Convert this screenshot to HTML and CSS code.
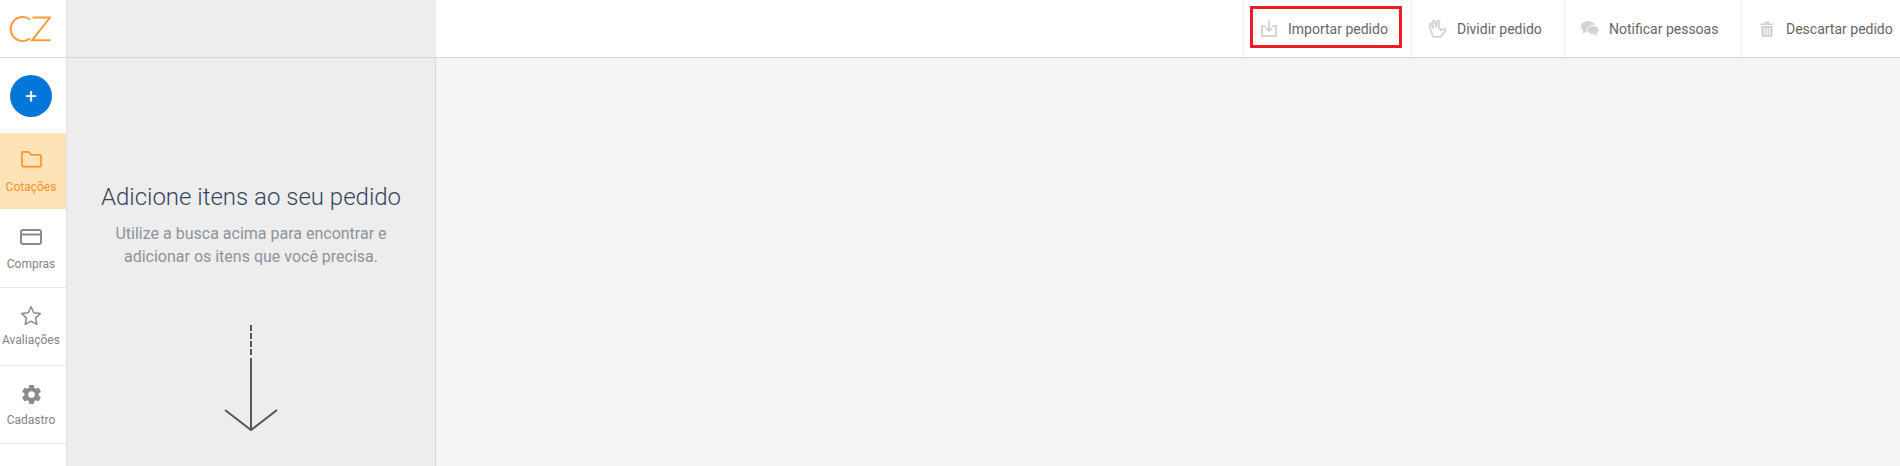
FILE: index.html
```html
<!DOCTYPE html>
<html lang="pt-BR">
<head>
<meta charset="utf-8">
<title>Pedido</title>
<link rel="stylesheet" href="styles.css">
</head>
<body>
<div class="app">
  <aside class="sidebar">
    <div class="logo">
      <svg width="42" height="26" viewBox="0 0 42 26" fill="none" stroke="#ff9a3c" stroke-width="2">
        <path d="M21 3.500A12 12 0 1 0 21 22.500"/>
        <path d="M23.500 1.500H41L23 24.300H41.500"/>
      </svg>
    </div>
    <div class="new-wrap"><button class="new-btn">+</button></div>
    <nav class="nav">
      <a class="nav-item quotes active">
        <span class="nav-icon"><svg width="21" height="18" viewBox="0 0 22 18" fill="none" stroke="#ff8f2b" stroke-width="1.700" stroke-linejoin="round"><path d="M1 3a1.500 1.500 0 0 1 1.500-1.500H8l2.500 3h9A1.500 1.500 0 0 1 21 6v9.500a1.500 1.500 0 0 1-1.500 1.500h-17A1.500 1.500 0 0 1 1 15.500z"/></svg></span>
        <span class="nav-label">Cotações</span>
      </a>
      <a class="nav-item purchases">
        <span class="nav-icon"><svg width="22" height="16" viewBox="0 0 22 16" fill="none" stroke="#8a8a8a" stroke-width="2"><rect x="1" y="1" width="20" height="14" rx="2"/><path d="M1 5.500H21"/></svg></span>
        <span class="nav-label">Compras</span>
      </a>
      <a class="nav-item reviews">
        <span class="nav-icon"><svg width="22" height="21" viewBox="0 0 22 21" fill="none" stroke="#8a8a8a" stroke-width="1.500" stroke-linejoin="round"><path d="M11 1.800l2.800 6 6.500.8-4.800 4.400 1.300 6.400L11 16.200l-5.800 3.200 1.300-6.400L1.700 8.600l6.500-.8z"/></svg></span>
        <span class="nav-label">Avaliações</span>
      </a>
      <a class="nav-item settings">
        <span class="nav-icon"><svg width="23" height="23" viewBox="0 0 24 24" fill="#8a8a8a"><path d="M19.400 13c.04-.33.060-.66.060-1s-.02-.67-.060-1l2.100-1.650a.5.5 0 0 0 .12-.64l-2-3.460a.5.5 0 0 0-.61-.22l-2.490 1a7.300 7.300 0 0 0-1.730-1l-.38-2.650A.49.49 0 0 0 13.900 2h-3.800a.49.49 0 0 0-.49.42l-.38 2.650a7.700 7.700 0 0 0-1.730 1l-2.490-1a.49.49 0 0 0-.61.22l-2 3.460a.49.49 0 0 0 .12.640L4.600 11c-.04.33-.070.67-.070 1s.030.67.070 1l-2.100 1.650a.5.5 0 0 0-.12.64l2 3.460c.12.22.39.3.61.22l2.490-1c.52.4 1.080.73 1.730 1l.38 2.650c.04.24.25.42.49.42h3.800c.24 0 .45-.18.49-.42l.38-2.650a7.700 7.700 0 0 0 1.730-1l2.490 1c.22.08.49 0 .61-.22l2-3.460a.5.5 0 0 0-.12-.64zM12 15.500a3.500 3.500 0 1 1 0-7 3.500 3.500 0 0 1 0 7z"/></svg></span>
        <span class="nav-label">Cadastro</span>
      </a>
    </nav>
  </aside>
  <div class="content">
    <header class="topbar">
      <div class="topbar-left"></div>
      <div class="actions">
        <button class="action first">
          <span class="highlight"></span>
          <svg width="16" height="17" viewBox="0 0 16 17" fill="none" stroke="#c8c8c8" stroke-width="1.500"><path d="M4.500 6H1v10h14V6h-3.500"/><path d="M8 .5v10M4.500 7.500L8 11l3.500-3.500"/></svg>
          <span>Importar pedido</span>
        </button>
        <button class="action second">
          <svg width="20" height="20" viewBox="0 0 20 20" fill="none" stroke="#d2d2d2" stroke-width="1.700" stroke-linejoin="round"><path d="M5 17.500L2.500 11 1.500 5.500c-.2-1.500 1.700-1.800 2-.3L5 9 4.800 2.800c0-1.500 2-1.500 2.100 0L8 8l1.500-5.800c.4-1.400 2.300-1 2 .5L10.500 9c1.500 0 2 1 2.300 2.500l2.700-1.500c1.500-.6 2.700 1 1.600 2L14 16.500c-.8 1-1.500 1.300-2.500 1.300H6.500c-.7 0-1.200-.1-1.500-.3z"/></svg>
          <span>Dividir pedido</span>
        </button>
        <button class="action third">
          <svg width="18" height="15" viewBox="0 0 18 15" fill="#d2d2d2"><ellipse cx="7" cy="5.500" rx="7" ry="5.500"/><path d="M2.500 8.500L1.500 13l5-3z"/><ellipse cx="12" cy="9" rx="6" ry="4.500" stroke="#fff" stroke-width="1"/><path d="M14.500 11.500l2.500 3.500-5-2z"/></svg>
          <span>Notificar pessoas</span>
        </button>
        <button class="action fourth">
          <svg width="14" height="16" viewBox="0 0 14 16" fill="#d2d2d2"><path d="M0.500 2.500h4.200V1.500c0-.6.4-1 1-1h2.600c.6 0 1 .4 1 1v1h4.200v1.500H.5z"/><path fill-rule="evenodd" d="M1.500 5h11v9.500c0 .8-.6 1.400-1.400 1.400H2.900c-.8 0-1.400-.6-1.400-1.400zM4 7v7h1V7zm2.500 0v7h1V7zM9 7v7h1V7z"/></svg>
          <span>Descartar pedido</span>
        </button>
      </div>
    </header>
    <div class="body">
      <section class="panel">
        <h2 class="panel-title">Adicione itens ao seu pedido</h2>
        <p class="panel-text">Utilize a busca acima para encontrar e<br>adicionar os itens que você precisa.</p>
        <svg class="arrow" width="54" height="106" viewBox="0 0 54 106" fill="none" stroke="#555" stroke-width="2">
          <path d="M27 0V32" stroke-dasharray="6 2"/>
          <path d="M27 33V105M1 85L27 105L53 85"/>
        </svg>
      </section>
      <main class="main"></main>
    </div>
  </div>
</div>
</body>
</html>
```
FILE: styles.css
```css
* { box-sizing: border-box; }
html, body { margin: 0; height: 100%; overflow: hidden; }
body { font-family: Roboto, "Liberation Sans", sans-serif; background: #f4f4f4; }
.app { display: flex; height: 466px; }

.sidebar { width: 67px; flex: none; background: #fff; border-right: 1px solid #e2e2e2; height: 466px; }
.logo { height: 58px; display: flex; align-items: center; padding: 1px 0 0 9px; border-bottom: 1px solid #d4d4da; }
.new-wrap { height: 75px; display: flex; justify-content: center; padding: 17px 4px 0 0; }
.new-btn { width: 42px; height: 42px; border: 0; border-radius: 50%; padding: 0; display: flex; align-items: center; justify-content: center; background: #0277d9; color: #fff; font: 400 20px/1 Roboto, sans-serif; }
.nav { display: flex; flex-direction: column; }
.nav-item { height: 78px; display: flex; flex-direction: column; align-items: center; padding-right: 4px; border-bottom: 1px solid #e8e8e8; color: #848484; font-size: 12px; line-height: 14px; }
.nav-icon { height: 22px; display: flex; align-items: center; justify-content: center; }
.nav-label { white-space: nowrap; }
.quotes { height: 76px; padding-top: 15px; background: #fde3b5; color: #ff8f2b; border-bottom: 0; }
.quotes .nav-label { margin-top: 10px; }
.purchases { height: 79px; padding-top: 17px; }
.purchases .nav-label { margin-top: 9px; }
.reviews { padding-top: 16px; }
.reviews .nav-label { margin-top: 7px; }
.settings { padding-top: 17px; }
.settings .nav-label { margin-top: 8px; }

.content { flex: 1; min-width: 0; display: flex; flex-direction: column; }
.topbar { height: 58px; display: flex; background: #fff; border-bottom: 1px solid #d4d4da; flex: none; }
.topbar-left { width: 369px; flex: none; background: #ededed; }
.actions { flex: 1; display: flex; justify-content: flex-end; }
.action { position: relative; height: 57px; border: 0; border-left: 1px solid #eeeef2; background: none; padding: 0; display: flex; align-items: center; color: #666; font: 400 14px/1 Roboto, sans-serif; white-space: nowrap; }
.action.first { width: 168px; padding-left: 17px; gap: 11px; }
.action.second { width: 153px; padding-left: 16px; gap: 9px; }
.action.third { width: 177px; padding-left: 16px; gap: 10px; }
.action.fourth { width: 159px; padding-left: 18px; gap: 12px; }
.highlight { position: absolute; left: 6px; top: 6px; width: 152px; height: 42px; border: 3px solid #ed1c24; }

.body { flex: 1; display: flex; min-height: 0; }
.panel { width: 369px; flex: none; background: #ededed; border-right: 1px solid #d8d8d8; display: flex; flex-direction: column; align-items: center; padding-top: 123px; }
.panel-title { margin: 0; font: 300 24px/32px Roboto, sans-serif; color: #34465c; white-space: nowrap; }
.panel-text { margin: 9px 0 0; font-size: 16px; line-height: 23px; color: #8e939b; text-align: center; }
.arrow { margin-top: 57px; flex: none; }
.main { flex: 1; background: #f4f4f4; }
```
